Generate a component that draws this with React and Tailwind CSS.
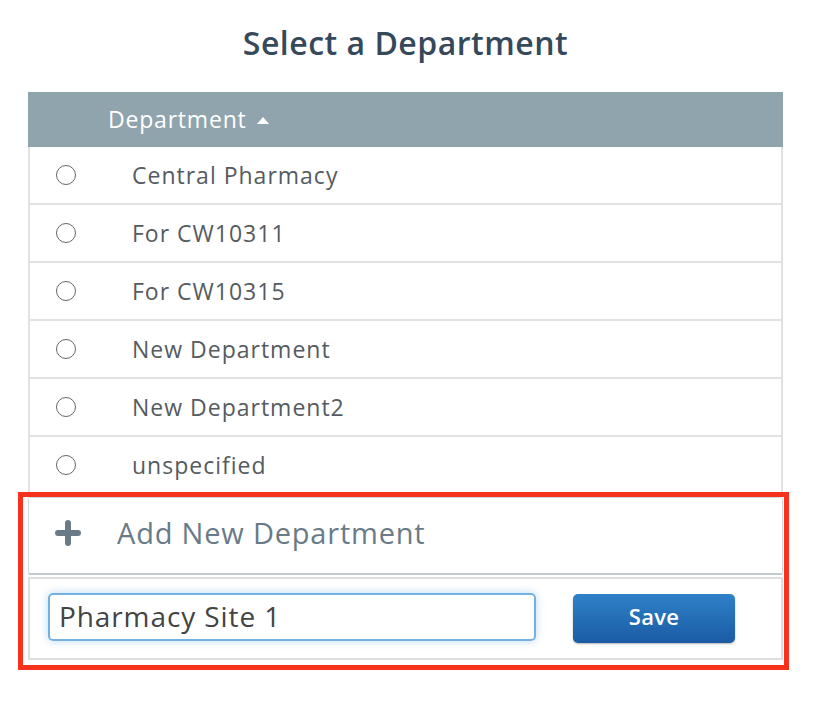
import React, { useState } from 'react';

const departments = [
  'Central Pharmacy',
  'For CW10311',
  'For CW10315',
  'New Department',
  'New Department2',
  'unspecified',
];

export default function App() {
  const [selected, setSelected] = useState(null);
  const [name, setName] = useState('Pharmacy Site 1');

  return (
    <div className="min-h-[702px] bg-white pt-[23px] font-['Open_Sans',sans-serif]">
      <h1 className="ml-[28px] w-[755px] text-center text-[32px] font-semibold leading-[40px] tracking-[0.5px] text-[#36495b]">
        Select a Department
      </h1>

      <div className="ml-[28px] mt-[29px] w-[755px]">
        {/* table header */}
        <div className="flex h-[55px] items-center bg-[#90a4ae] pl-[80px] text-[23px] tracking-[0.8px] text-white">
          <span>Department</span>
          <svg className="ml-[10px] mt-[2px]" width="12" height="7" viewBox="0 0 12 7">
            <path d="M0 7 L6 0 L12 7 Z" fill="#ffffff" />
          </svg>
        </div>

        {/* rows */}
        {departments.map((d) => (
          <div
            key={d}
            onClick={() => setSelected(d)}
            className="flex h-[58px] cursor-pointer items-center border-x-2 border-b-2 border-[#e2e2e2] text-[23px] tracking-[1px] text-[#555b60]"
          >
            <span className="ml-[26px] flex h-[20px] w-[20px] items-center justify-center rounded-full border-[1.5px] border-[#666]">
              {selected === d && <span className="h-[10px] w-[10px] rounded-full bg-[#555]" />}
            </span>
            <span className="ml-[56px]">{d}</span>
          </div>
        ))}

        {/* add new department */}
        <div className="relative mt-[2px] pb-[10px]">
          <div className="flex h-[78px] items-center rounded-[2px] border border-[#d7dadd] border-b-2 border-b-[#c3c8cd] pb-[6px] text-[29px] tracking-[0.8px] text-[#6a7b88]">
            <svg className="ml-[26px]" width="26" height="26" viewBox="0 0 26 26">
              <path d="M13 3 V23 M3 13 H23" stroke="#6a7b88" strokeWidth="6" strokeLinecap="round" />
            </svg>
            <span className="ml-[36px]">Add New Department</span>
          </div>

          <div className="mt-[2px] flex h-[83px] items-start border-2 border-[#dedede] pl-[18px] pt-[14px]">
            <input
              value={name}
              onChange={(e) => setName(e.target.value)}
              className="h-[48px] w-[488px] rounded-[5px] border-2 border-[#75b0e2] px-[9px] pb-[2px] text-[28px] tracking-[0.9px] text-[#444] shadow-[0_0_8px_rgba(102,170,230,0.45)] outline-none"
            />
            <button className="ml-[37px] mt-[1px] h-[49px] w-[162px] rounded-[5px] bg-gradient-to-b from-[#2f82c8] to-[#1a5ba4] pb-[4px] text-[22px] font-semibold tracking-[0.3px] text-white shadow-[0_1px_2px_rgba(0,0,0,0.3)]">
              Save
            </button>
          </div>

          {/* annotation outline */}
          <div className="pointer-events-none absolute -left-[10px] -right-[6px] -top-[5px] bottom-0 border-[5px] border-[#f6321c]" />
        </div>
      </div>
    </div>
  );
}
